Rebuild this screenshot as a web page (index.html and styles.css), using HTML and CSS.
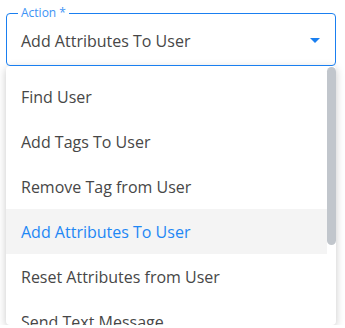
FILE: index.html
```html
<!DOCTYPE html>
<html lang="en">
<head>
  <meta charset="UTF-8" />
  <title>Action select</title>
  <link rel="stylesheet" href="styles.css">
</head>
<body>

<div class="wrap">
  <div class="field">
    <span class="field-label">Action *</span>
    <span class="field-value">Add Attributes To User</span>
    <svg class="arrow" width="10" height="5" viewBox="0 0 10 5"><path d="M0 0h10L5 5z" fill="#1a7ff0"/></svg>
  </div>

  <div class="menu">
    <ul class="options">
      <li>Find User</li>
      <li>Add Tags To User</li>
      <li>Remove Tag from User</li>
      <li class="active">Add Attributes To User</li>
      <li>Reset Attributes from User</li>
      <li>Send Text Message</li>
    </ul>
    <div class="scrollbar"><div class="thumb"></div></div>
  </div>
</div>

</body>
</html>
```

FILE: styles.css
```css
body {
  margin: 0;
  font-family: 'Open Sans', sans-serif;
  color: #474747;
  background: #fff;
}
.wrap {
  width: 330px;
  padding: 13px 0 0 6px;
}
.field {
  position: relative;
  display: flex;
  align-items: center;
  justify-content: space-between;
  height: 53px;
  padding: 0 15px 0 14px;
  border: 1px solid #1a7ff0;
  border-radius: 4px;
  box-sizing: border-box;
}
.field-label {
  position: absolute;
  top: -10px;
  left: 11px;
  padding: 0 3px;
  background: #fff;
  color: #3d93f5;
  font-size: 12px;
  line-height: 17px;
}
.field-value {
  font-size: 16px;
  padding-top: 2px;
}
.arrow {
  margin-top: 2px;
}
.menu {
  display: flex;
  height: 259px;
  overflow: hidden;
  background: #fff;
  border-radius: 4px;
  box-shadow: 0 2px 8px rgba(0, 0, 0, 0.22);
}
.options {
  flex: 1;
  list-style: none;
  margin: 0;
  padding: 8px 0;
}
.options li {
  height: 45px;
  line-height: 47px;
  padding-left: 15px;
  font-size: 16px;
  white-space: nowrap;
}
.options li.active {
  background: #f4f4f4;
  color: #1e87f4;
}
.scrollbar {
  width: 9px;
  padding-top: 1px;
}
.thumb {
  height: 178px;
  background: #c1c6cc;
  border-radius: 5px;
}
```
